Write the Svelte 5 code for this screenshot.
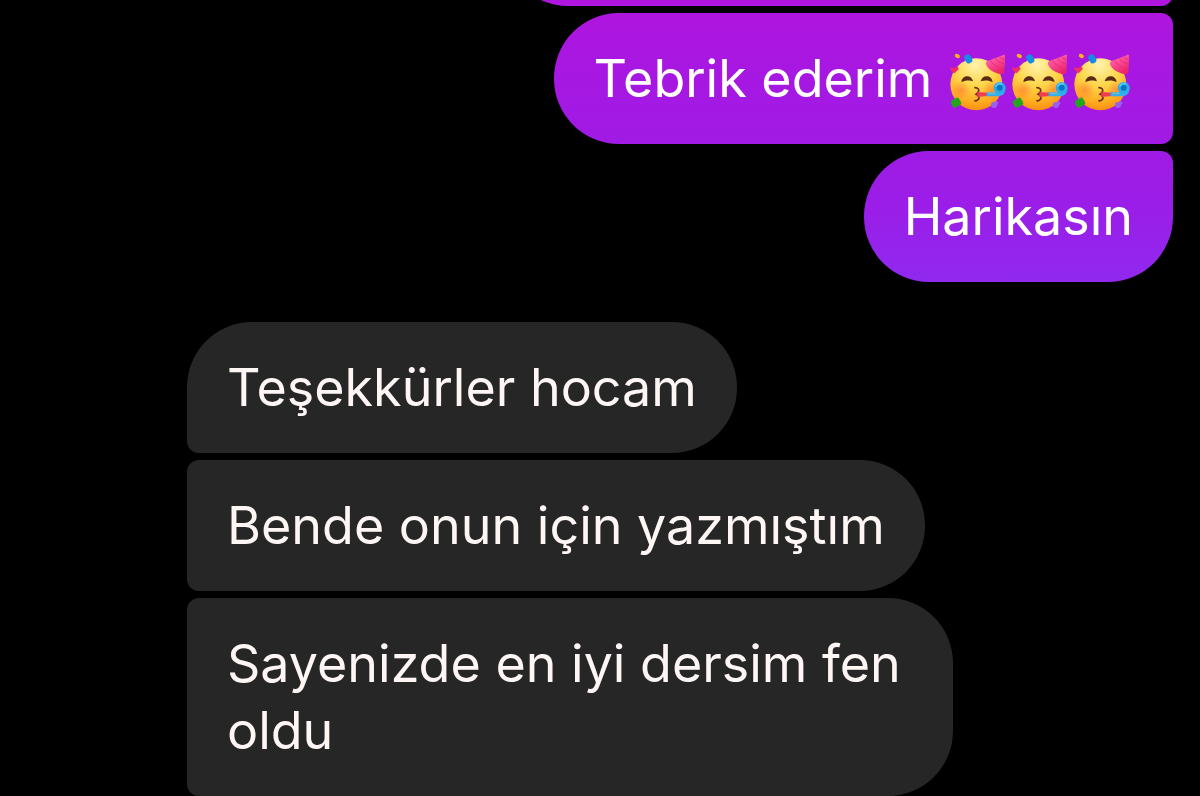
<script lang="ts">
  interface Message {
    text: string;
    party?: number;
  }

  interface Group {
    sender: 'me' | 'them';
    messages: Message[];
  }

  const groups: Group[] = [
    {
      sender: 'me',
      messages: [
        { text: '' },
        { text: 'Tebrik ederim', party: 3 },
        { text: 'Harikasın' }
      ]
    },
    {
      sender: 'them',
      messages: [
        { text: 'Teşekkürler hocam' },
        { text: 'Bende onun için yazmıştım' },
        { text: 'Sayenizde en iyi dersim fen oldu' }
      ]
    }
  ];
</script>

{#snippet partyFace()}
  <svg class="emoji" viewBox="15 15 186 186" role="img" aria-label="🥳">
    <circle cx="103" cy="112" r="78" fill="url(#face)" />
    <circle cx="57" cy="130" r="29" fill="url(#blush)" />
    <circle cx="151" cy="130" r="29" fill="url(#blush)" />

    <!-- eyes -->
    <g fill="#5a2a12">
      <path d="M58 105 C60 82 90 82 93 103 C85 99 69 99 58 105 Z" />
      <path d="M116 103 C120 82 149 82 152 105 C141 99 126 99 116 103 Z" />
    </g>

    <!-- mouth -->
    <path d="M99 122 C108 122 113 128 109 134 C107 138 104 140 102 142 C110 145 114 153 108 158 C105 161 102 162 99 161" fill="none" stroke="#6b3010" stroke-width="5" stroke-linecap="round" />

    <!-- blower -->
    <path d="M106 135 L137 137 L137 147 L106 150 Z" fill="#f13b52" />
    <path d="M134 142 H169 Q184 141 184 124" fill="none" stroke="#36b0e8" stroke-width="12" />
    <circle cx="173" cy="123" r="18" fill="#29aeea" />
    <circle cx="173" cy="122" r="9" fill="#0873c4" />
    <path d="M162 118 Q167 107 178 111" fill="none" stroke="#62d1fa" stroke-width="4" stroke-linecap="round" />
    <path d="M139 139 H160" stroke="#7bb9d3" stroke-width="4" />

    <!-- hat -->
    <path d="M182 25 Q186 20 189 25 Q189 52 187 76 Q184 84 170 80 Q138 72 132 52 Q130 44 139 41 Z" fill="url(#hat)" />
    <path d="M146 41 Q155 59 186 65 M160 35 Q168 48 187 50 M173 30 Q178 36 188 37" fill="none" stroke="#e0307f" stroke-width="3" />

    <!-- confetti -->
    <ellipse cx="46" cy="27" rx="8" ry="6" fill="#fbb51c" transform="rotate(25 46 27)" />
    <rect x="69" y="22" width="20" height="27" rx="8" fill="#148ee5" transform="rotate(-28 79 36)" />
    <path d="M24 64 Q25 59 34 64 L46 59 Q53 64 47 70 L38 79 Q31 76 28 71 Z" fill="#ee2e64" />
    <rect x="28" y="155" width="28" height="24" rx="7" fill="#23a51d" transform="rotate(-30 42 167)" />
    <circle cx="156" cy="174" r="9" fill="#9860ef" />
    <circle cx="164" cy="168" r="5" fill="#9860ef" />
  </svg>
{/snippet}

<svg class="defs" width="0" height="0" aria-hidden="true">
  <defs>
    <radialGradient id="face" cx="48%" cy="12%" r="90%">
      <stop offset="0" stop-color="#fff3ad" />
      <stop offset="0.45" stop-color="#fed64b" />
      <stop offset="0.8" stop-color="#ffac20" />
      <stop offset="1" stop-color="#f58a12" />
    </radialGradient>
    <radialGradient id="blush">
      <stop offset="0" stop-color="#ff7c37" stop-opacity="0.65" />
      <stop offset="1" stop-color="#ff7c37" stop-opacity="0" />
    </radialGradient>
    <linearGradient id="hat" x1="0" y1="0" x2="0.5" y2="1">
      <stop offset="0" stop-color="#ff79ae" />
      <stop offset="0.5" stop-color="#fb4c97" />
      <stop offset="1" stop-color="#ee2566" />
    </linearGradient>
  </defs>
</svg>

<main class="chat">
  {#each groups as group}
    <section class="group {group.sender}">
      {#each group.messages as message}
        <div class="bubble" class:blank={!message.text}>
          {message.text}
          {#if message.party}
            <span class="emojis">
              {#each Array(message.party) as _}
                {@render partyFace()}
              {/each}
            </span>
          {/if}
        </div>
      {/each}
    </section>
  {/each}
</main>

<style>
  :global(body) {
    margin: 0;
    background: #000;
  }

  .defs {
    position: absolute;
  }

  /* newest message stays at the bottom, older ones run off the top */
  .chat {
    height: 100vh;
    box-sizing: border-box;
    padding: 0 27px 0 187px;
    display: flex;
    flex-direction: column;
    justify-content: flex-end;
    gap: 40px;
    overflow: hidden;
    background: #000;
    font-family: Inter, 'Noto Sans', sans-serif;
    font-size: 52px;
    line-height: 67px;
  }

  .group {
    display: flex;
    flex-direction: column;
    flex-shrink: 0;
    gap: 7px;
  }

  .bubble {
    box-sizing: border-box;
    max-width: 766px;
    min-height: 131px;
    padding: 32px 40px;
    border-radius: 65px;
  }

  .me {
    align-items: flex-end;
  }

  .me .bubble {
    color: #fff;
    background: linear-gradient(#b015de 0, #a618e2 80px, #9b1de7 200px, #9029ef 285px) fixed;
    border-top-right-radius: 12px;
    border-bottom-right-radius: 12px;
  }

  .me .bubble:last-child {
    border-bottom-right-radius: 65px;
  }

  .me .blank {
    width: 68%;
  }

  .them {
    align-items: flex-start;
  }

  .them .bubble {
    color: #fdf6f5;
    background: #262626;
    border-top-left-radius: 12px;
    border-bottom-left-radius: 12px;
  }

  .them .bubble:first-child {
    border-top-left-radius: 65px;
  }

  /* pulled in so the faces never make the line taller than plain text */
  .emojis {
    display: inline-flex;
    margin: -8px 0;
    vertical-align: middle;
  }

  .emoji {
    width: 62px;
    height: 62px;
  }
</style>
